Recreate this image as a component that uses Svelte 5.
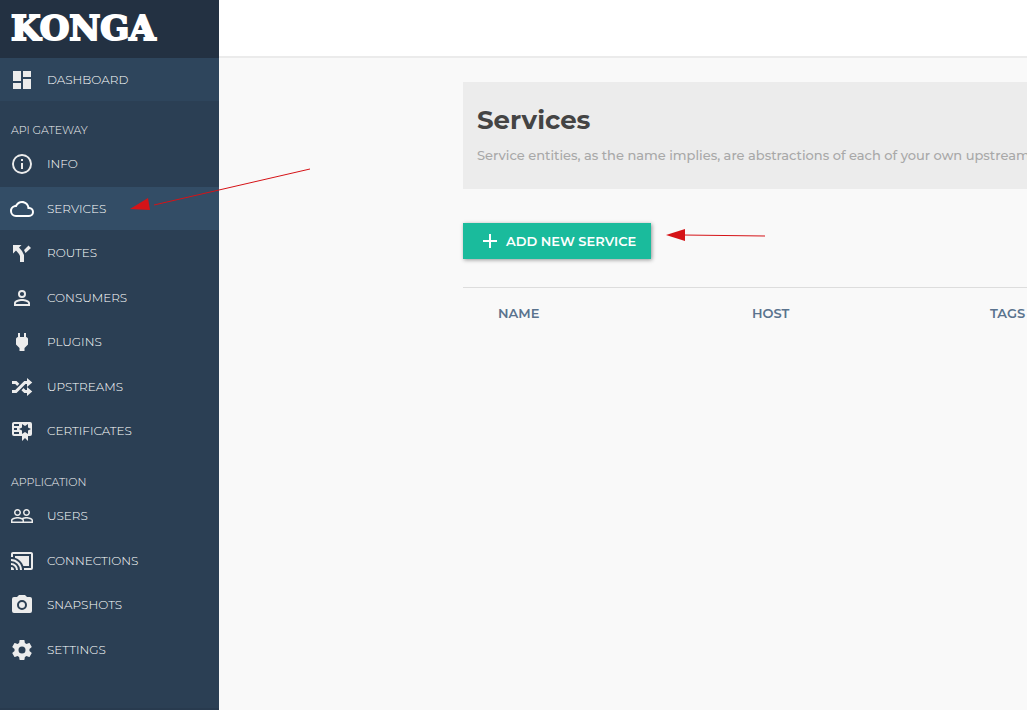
<script>
  const sections = [
    {
      title: 'API GATEWAY',
      items: [
        { label: 'INFO', d: 'M11,9H13V7H11M12,20C7.59,20 4,16.41 4,12C4,7.59 7.59,4 12,4C16.41,4 20,7.59 20,12C20,16.41 16.41,20 12,20M12,2A10,10 0 0,0 2,12A10,10 0 0,0 12,22A10,10 0 0,0 22,12A10,10 0 0,0 12,2M11,17H13V11H11V17Z' },
        { label: 'SERVICES', active: true, d: 'M19,18H6A4,4 0 0,1 2,14A4,4 0 0,1 6,10H6.71C7.37,7.69 9.5,6 12,6A5.5,5.5 0 0,1 17.5,11.5V12H19A3,3 0 0,1 22,15A3,3 0 0,1 19,18M19.35,10.03C18.67,6.59 15.64,4 12,4C9.11,4 6.6,5.64 5.35,8.03C2.34,8.36 0,10.9 0,14A6,6 0 0,0 6,20H19A5,5 0 0,0 24,15C24,12.36 21.95,10.22 19.35,10.03Z' },
        { label: 'ROUTES', d: 'M3,4V12.5L6,9.5L9,13L10,15V21H14V14L12,10L9,6.5L11.5,4M18.5,4.5L14,9L15.5,12L21,7' },
        { label: 'CONSUMERS', d: 'M12,13C9.33,13 4,14.33 4,17V20H20V17C20,14.33 14.67,13 12,13M12,4A4,4 0 0,0 8,8A4,4 0 0,0 12,12A4,4 0 0,0 16,8A4,4 0 0,0 12,4M12,14.9C14.97,14.9 18.1,16.36 18.1,17V18.1H5.9V17C5.9,16.36 9,14.9 12,14.9M12,5.9A2.1,2.1 0 0,1 14.1,8A2.1,2.1 0 0,1 12,10.1A2.1,2.1 0 0,1 9.9,8A2.1,2.1 0 0,1 12,5.9Z' },
        { label: 'PLUGINS', d: 'M16,7V3H14V7H10V3H8V7H8C7,7 6,8 6,9V14.5L9.5,18V21H14.5V18L18,14.5V9C18,8 17,7 16,7Z' },
        { label: 'UPSTREAMS', d: 'M17,3L22.25,7.5L17,12L22.25,16.5L17,21V18H14.26L11.44,15.18L13.56,13.06L15.5,15H17V12L17,9H15.5L6.5,18H2V15H5.26L14.26,6H17V3M2,6H6.5L9.32,8.82L7.2,10.94L5.26,9H2V6Z' },
        { label: 'CERTIFICATES', d: 'M4,3C2.89,3 2,3.89 2,5V15A2,2 0 0,0 4,17H12V22L15,19L18,22V17H20A2,2 0 0,0 22,15V8L22,6V5A2,2 0 0,0 20,3H16V3H4M12,5L15,7L18,5V8.5L21,10L18,11.5V15L15,13L12,15V11.5L9,10L12,8.5V5M4,5H9V7H4V5M4,9H7V11H4V9M4,13H9V15H4V13Z' }
      ]
    },
    {
      title: 'APPLICATION',
      items: [
        { label: 'USERS', d: 'M16.5 13c-1.2 0-3.07.34-4.5 1-1.43-.67-3.3-1-4.5-1C5.33 13 1 14.08 1 16.25V19h22v-2.75c0-2.17-4.33-3.25-6.5-3.25zm-4 4.5h-10v-1.25c0-.54 2.56-1.75 5-1.75s5 1.21 5 1.75v1.25zm9 0H14v-1.25c0-.46-.2-.86-.52-1.22.88-.3 1.96-.53 3.02-.53 2.44 0 5 1.21 5 1.75v1.25zM7.5 12c1.93 0 3.5-1.57 3.5-3.5S9.43 5 7.5 5 4 6.57 4 8.5 5.57 12 7.5 12zm0-5.5c1.1 0 2 .9 2 2s-.9 2-2 2-2-.9-2-2 .9-2 2-2zm9 5.5c1.93 0 3.5-1.57 3.5-3.5S18.43 5 16.5 5 13 6.57 13 8.5s1.57 3.5 3.5 3.5zm0-5.5c1.1 0 2 .9 2 2s-.9 2-2 2-2-.9-2-2 .9-2 2-2z' },
        { label: 'CONNECTIONS', d: 'M21,3H3C1.89,3 1,3.89 1,5V8H3V5H21V19H14V21H21A2,2 0 0,0 23,19V5C23,3.89 22.1,3 21,3M1,10V12A9,9 0 0,1 10,21H12C12,14.92 7.07,10 1,10M19,7H5V8.63C8.96,9.91 12.09,13.04 13.37,17H19M1,14V16A5,5 0 0,1 6,21H8A7,7 0 0,0 1,14M1,18V21H4A3,3 0 0,0 1,18Z' },
        { label: 'SNAPSHOTS', d: 'M4,4H7L9,2H15L17,4H20A2,2 0 0,1 22,6V18A2,2 0 0,1 20,20H4A2,2 0 0,1 2,18V6A2,2 0 0,1 4,4M12,7A5,5 0 0,0 7,12A5,5 0 0,0 12,17A5,5 0 0,0 17,12A5,5 0 0,0 12,7M12,9A3,3 0 0,1 15,12A3,3 0 0,1 12,15A3,3 0 0,1 9,12A3,3 0 0,1 12,9Z' },
        { label: 'SETTINGS', d: 'M12,15.5A3.5,3.5 0 0,1 8.5,12A3.5,3.5 0 0,1 12,8.5A3.5,3.5 0 0,1 15.5,12A3.5,3.5 0 0,1 12,15.5M19.43,12.97C19.47,12.65 19.5,12.33 19.5,12C19.5,11.67 19.47,11.34 19.43,11L21.54,9.37C21.73,9.22 21.78,8.95 21.66,8.73L19.66,5.27C19.54,5.05 19.27,4.96 19.05,5.05L16.56,6.05C16.04,5.66 15.5,5.32 14.87,5.07L14.5,2.42C14.46,2.18 14.25,2 14,2H10C9.75,2 9.54,2.18 9.5,2.42L9.13,5.07C8.5,5.32 7.96,5.66 7.44,6.05L4.95,5.05C4.73,4.96 4.46,5.05 4.34,5.27L2.34,8.73C2.21,8.95 2.27,9.22 2.46,9.37L4.57,11C4.53,11.34 4.5,11.67 4.5,12C4.5,12.33 4.53,12.65 4.57,12.97L2.46,14.63C2.27,14.78 2.21,15.05 2.34,15.27L4.34,18.73C4.46,18.95 4.73,19.03 4.95,18.95L7.44,17.94C7.96,18.34 8.5,18.68 9.13,18.93L9.5,21.58C9.54,21.82 9.75,22 10,22H14C14.25,22 14.46,21.82 14.5,21.58L14.87,18.93C15.5,18.67 16.04,18.34 16.56,17.94L19.05,18.95C19.27,19.03 19.54,18.95 19.66,18.73L21.66,15.27C21.78,15.05 21.73,14.78 21.54,14.63L19.43,12.97Z' }
      ]
    }
  ];
  const dashboard = 'M3 13h8V3H3v10zm0 8h8v-6H3v6zm10 0h8V11h-8v10zm0-18v6h8V3h-8z';
</script>

{#snippet link(label, d, active)}
  <a href="#{label.toLowerCase()}" class:active aria-current={active ? 'page' : undefined}>
    <svg viewBox="0 0 24 24" aria-hidden="true"><path {d} /></svg>
    <span>{label}</span>
  </a>
{/snippet}

<div class="shell">
  <aside>
    <div class="brand">KONGA</div>
    <nav>
      <div class="home">{@render link('DASHBOARD', dashboard, false)}</div>
      {#each sections as section}
        <h2>{section.title}</h2>
        <ul>
          {#each section.items as item}
            <li>{@render link(item.label, item.d, item.active)}</li>
          {/each}
        </ul>
      {/each}
    </nav>
  </aside>

  <div class="page">
    <header class="topbar"></header>
    <main>
      <section class="hero">
        <h1>Services</h1>
        <p>Service entities, as the name implies, are abstractions of each of your own upstream services.</p>
      </section>
      <button type="button">
        <svg viewBox="0 0 24 24" aria-hidden="true"><path d="M19 13h-6v6h-2v-6H5v-2h6V5h2v6h6z" /></svg>
        <span>ADD NEW SERVICE</span>
      </button>
      <table>
        <thead>
          <tr><td class="mark"></td><th class="name">NAME</th><th class="host">HOST</th><th>TAGS</th></tr>
        </thead>
      </table>
    </main>
  </div>

  <svg class="arrow to-services" width="182" height="46" viewBox="0 0 182 46" aria-hidden="true">
    <path d="M25 38L181 2" /><polygon points="1,42 19,31 21,43" />
  </svg>
  <svg class="arrow to-button" width="102" height="14" viewBox="0 0 102 14" aria-hidden="true">
    <path d="M18 7L100 8" /><polygon points="1,7 20,1 20,13" />
  </svg>
</div>

<style>
  :global(body) { margin: 0; background: #f9f9f9; }
  .shell {
    position: relative;
    display: flex;
    min-height: 100vh;
    overflow: hidden;
    font-family: Montserrat, Inter, "Open Sans", sans-serif;
  }
  aside {
    flex: 0 0 219px;
    box-sizing: border-box;
    background: #2b3f54;
    border-bottom: 2px solid #283a4e;
  }
  .brand {
    box-sizing: border-box;
    height: 58px;
    padding: 8px 11px;
    background: #233142;
    color: #fff;
    font: bold 34px/40px "DejaVu Serif", serif;
    -webkit-text-stroke: 2px #fff;
  }
  .home { background: #2e455c; }
  ul { list-style: none; margin: 0; padding: 0; }
  li:nth-child(even) { margin-top: 2px; }
  li:nth-child(odd) { margin-top: 1px; }
  a {
    display: flex;
    align-items: center;
    gap: 13px;
    height: 43px;
    padding: 0 10px;
    color: #fff;
    font-size: 12px;
    font-weight: 300;
    text-decoration: none;
  }
  a svg { width: 24px; height: 24px; fill: #ececec; }
  a.active { background: #334d66; }
  a.active svg { fill: #fff; }
  h2 {
    margin: 0;
    padding: 20px 11px 2px;
    color: #f4f4f4;
    font-size: 11px;
    line-height: 18px;
    font-weight: 300;
  }
  ul + h2 { padding-top: 21px; }
  .page { flex: 1; min-width: 0; }
  .topbar { height: 56px; background: #fff; border-bottom: 2px solid #ebebeb; }
  main { min-width: 1140px; padding: 24px 24px 24px 244px; }
  .hero { padding: 20px 14px 23px; background: #ececec; }
  h1 { margin: 0; color: #444; font-size: 26px; line-height: 36px; font-weight: 700; }
  p { margin: 6px 0 0; color: #a8a8a8; font-size: 13px; line-height: 22px; font-weight: 500; white-space: nowrap; }
  button {
    display: flex;
    align-items: center;
    gap: 4px;
    height: 36px;
    margin: 34px 0 28px;
    padding: 0 15px;
    border: 0;
    background: #1abb9c;
    box-shadow: 1px 1px 4px rgba(0, 0, 0, .4);
    color: #fff;
    font-family: inherit;
    font-size: 13px;
    font-weight: 600;
  }
  button svg { width: 24px; height: 24px; fill: currentColor; }
  table { width: 100%; table-layout: fixed; border-collapse: collapse; border-top: 1px solid #ddd; }
  td, th { padding: 0; height: 49px; text-align: left; color: #5a738e; font-size: 13px; font-weight: 600; }
  .mark { width: 35px; }
  .name { width: 254px; }
  .host { width: 238px; }
  .arrow { position: absolute; fill: #d51317; stroke: #d51317; stroke-width: 1; pointer-events: none; }
  .arrow polygon { stroke: none; }
  .to-services { left: 129px; top: 167px; }
  .to-button { left: 665px; top: 228px; }
</style>
